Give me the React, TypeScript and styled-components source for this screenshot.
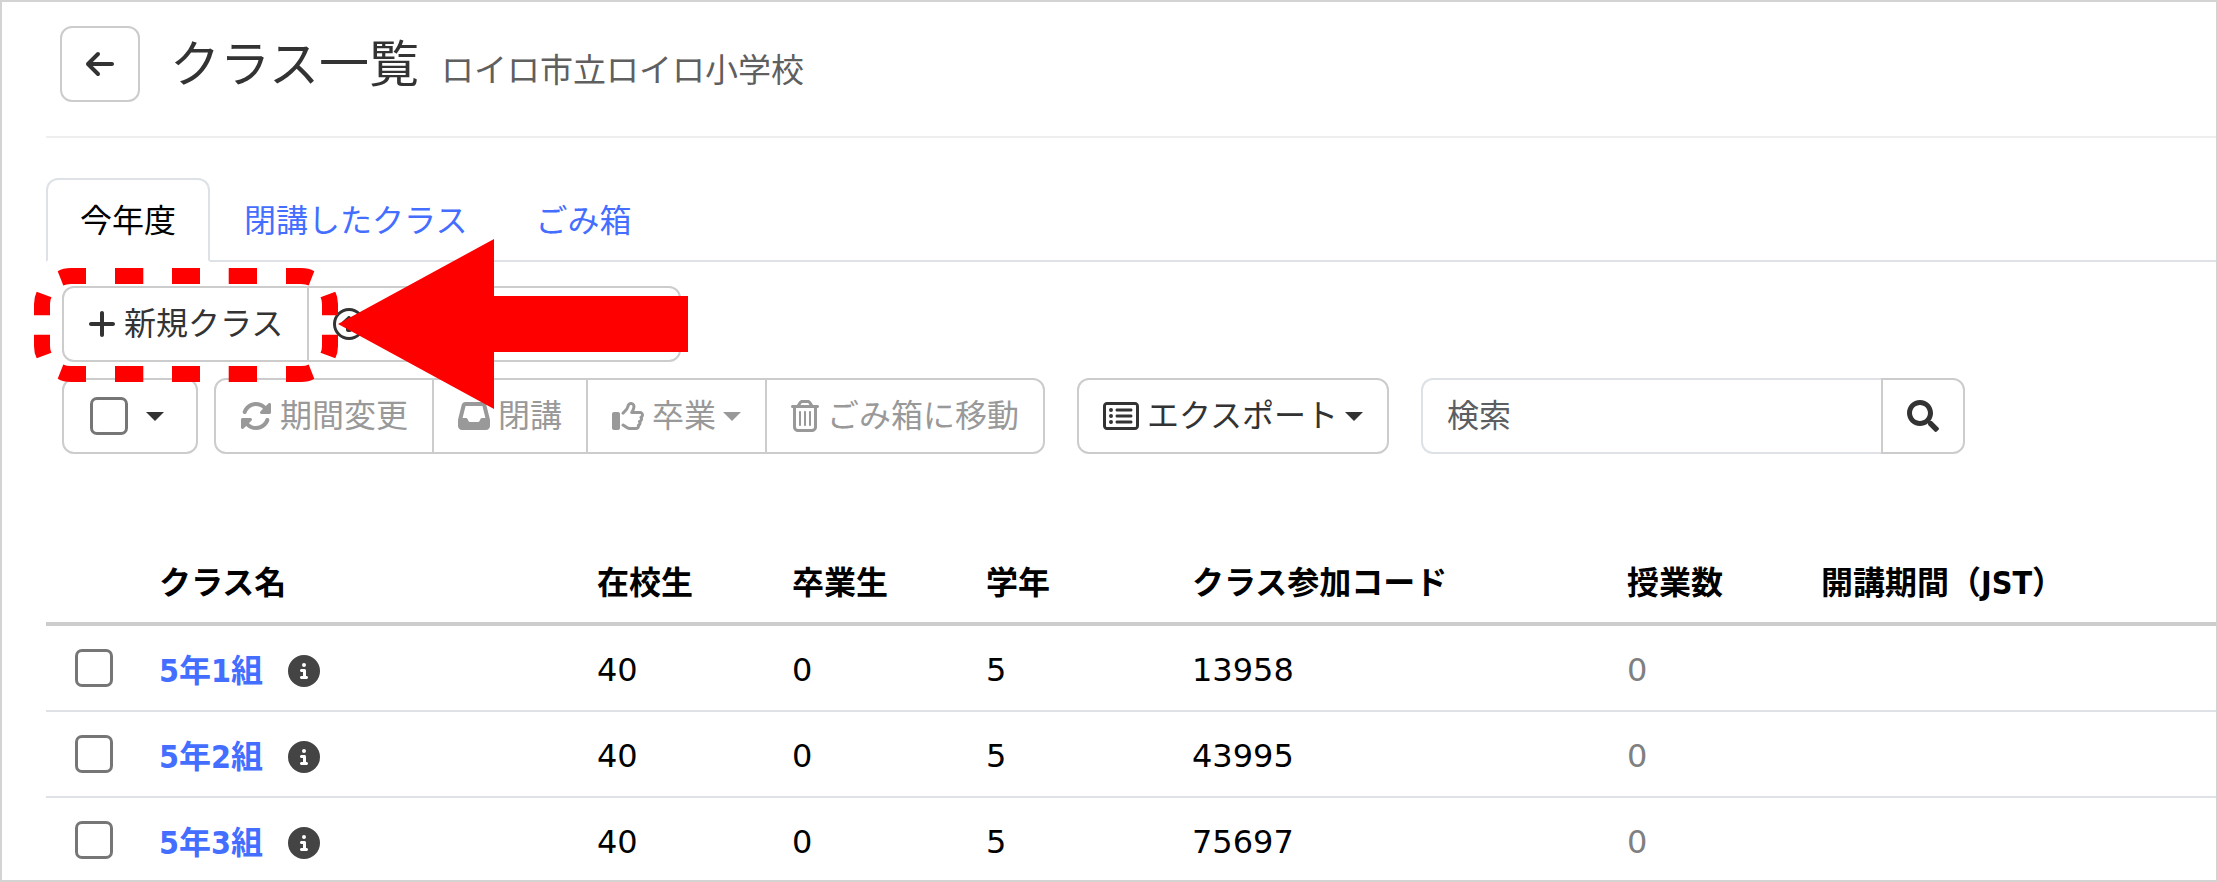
import React from "react";
import styled, { createGlobalStyle, css } from "styled-components";
import { FaSearch } from "react-icons/fa";
import {
  FaArrowLeft,
  FaCircleInfo,
  FaInbox,
  FaPlus,
  FaRegCircleUp,
  FaRegRectangleList,
  FaRegThumbsUp,
  FaRegTrashCan,
  FaRotate,
} from "react-icons/fa6";

const GlobalStyle = createGlobalStyle`
  *, *::before, *::after { box-sizing: border-box; }
  body {
    margin: 0;
    background: #fff;
    color: #000;
    font-family: "DejaVu Sans", "Noto Sans CJK JP", sans-serif;
    font-size: 32px;
    line-height: 48px;
  }
  button, input { font: inherit; }
  svg { flex: none; }
`;

const Frame = styled.div`
  position: relative;
  height: 100vh;
  padding-left: 44px;
  border: 2px solid #d3d3d3;
  overflow: auto;
  scrollbar-width: none;
`;

const PageHeader = styled.header`
  display: flex;
  align-items: center;
  gap: 30px;
  padding: 24px 14px 34px;
  border-bottom: 2px solid #eee;
`;

const buttonBox = css`
  display: inline-flex;
  align-items: center;
  justify-content: center;
  height: 76px;
  padding: 0 24px;
  border: 2px solid #ccc;
  background: #fff;
  color: #333;
  white-space: nowrap;
  cursor: pointer;
`;

const narrowIcon = css`
  width: 28px;
  height: 32px;
`;

const BackIcon = styled(FaArrowLeft)`
  ${narrowIcon}
`;

const PlusIcon = styled(FaPlus)`
  ${narrowIcon}
`;

const TrashIcon = styled(FaRegTrashCan)`
  ${narrowIcon}
`;

const ListIcon = styled(FaRegRectangleList)`
  width: 36px;
  height: 32px;
`;

const BackButton = styled.button`
  ${buttonBox}
  border-radius: 12px;
`;

const Heading = styled.div`
  display: flex;
  align-items: baseline;
  gap: 22px;
  padding-top: 2px;
`;

const Title = styled.h1`
  margin: 0;
  color: #333;
  font-size: 50px;
  font-weight: 400;
  line-height: 60px;
`;

const School = styled.span`
  color: #5f5f5f;
  font-size: 33px;
`;

const Tabs = styled.nav`
  display: flex;
  margin-top: 40px;
  border-bottom: 2px solid #dee2e6;
`;

const Tab = styled.a<{ $active?: boolean }>`
  height: 84px;
  margin-bottom: -2px;
  padding: 17px 32px 15px;
  border: 2px solid transparent;
  border-radius: 12px 12px 0 0;
  color: #446eff;
  text-decoration: none;
  ${(p) =>
    p.$active &&
    css`
      border-color: #dee2e6 #dee2e6 #fff;
      background: #fff;
      color: #000;
    `}
`;

const Actions = styled.div`
  display: flex;
  flex-direction: column;
  gap: 16px;
  padding: 24px 16px 0;
`;

const Toolbar = styled.div`
  display: flex;
  flex-wrap: wrap;
  gap: 16px 32px;
`;

const SelectionTools = styled.div`
  display: flex;
  gap: 16px;
`;

const Group = styled.div`
  display: flex;
`;

const Button = styled.button<{ $wide?: boolean }>`
  ${buttonBox}
  gap: 8px;
  justify-content: flex-start;
  ${(p) => p.$wide && "width: 374px;"}

  & + & { margin-left: -2px; }
  &:first-child { border-radius: 12px 0 0 12px; }
  &:last-child { border-radius: 0 12px 12px 0; }
  &:only-child { border-radius: 12px; }
  &:disabled { color: #999; cursor: default; }
`;

const Caret = styled.span`
  border: 9px solid transparent;
  border-top-color: currentColor;
  border-bottom: 0;
`;

const MenuLabel = styled.span`
  display: inline-flex;
  align-items: center;
  gap: 7px;
`;

const Checkbox = styled.input`
  display: block;
  appearance: none;
  width: 38px;
  height: 38px;
  margin: 0;
  border: 3px solid #767676;
  border-radius: 7px;
  background: #fff;
  &:checked { background: #446eff; }
`;

const SelectAll = styled.div`
  display: flex;
  align-items: center;
  gap: 18px;
  height: 76px;
  padding: 0 32px 0 26px;
  border: 2px solid #ccc;
  border-radius: 12px;
`;

const CaretButton = styled.button`
  display: flex;
  padding: 0;
  border: 0;
  background: none;
  color: #333;
`;

const Search = styled.form`
  display: flex;
  width: 544px;
`;

const SearchInput = styled.input`
  flex: 1;
  min-width: 0;
  height: 76px;
  padding: 0 24px;
  border: 2px solid #dee2e6;
  border-right: 0;
  border-radius: 12px 0 0 12px;
  color: #333;
  &::placeholder { color: #5c5f62; opacity: 1; }
`;

const SearchButton = styled.button`
  ${buttonBox}
  border-radius: 0 12px 12px 0;
`;

const Table = styled.table`
  width: 100%;
  margin-top: 88px;
  border-collapse: separate;
  border-spacing: 0;
  table-layout: fixed;
`;

const Col = styled.col<{ $width?: number }>`
  width: ${(p) => (p.$width ? `${p.$width}px` : "auto")};
`;

const HeadCell = styled.th`
  height: 84px;
  padding: 2px 16px 0;
  border-bottom: 4px solid #ccc;
  font-family: "DejaVu Sans Condensed", "DejaVu Sans", "Noto Sans CJK JP", sans-serif;
  font-weight: 700;
  text-align: left;
  white-space: nowrap;
`;

const Cell = styled.td<{ $muted?: boolean }>`
  height: 86px;
  padding: 4px 16px 0;
  border-bottom: 2px solid #dee2e6;
  color: ${(p) => (p.$muted ? "#808080" : "#000")};
  white-space: nowrap;
`;

const CheckCell = styled(Cell)`
  padding: 0 0 0 29px;
`;

const NameBox = styled.div`
  display: flex;
  align-items: center;
  gap: 25px;
  padding-top: 2px;
`;

const ClassLink = styled.a`
  color: #446eff;
  font-family: "DejaVu Sans Condensed", "DejaVu Sans", "Noto Sans CJK JP", sans-serif;
  font-weight: 700;
  text-decoration: none;
`;

const InfoButton = styled.button`
  display: flex;
  padding: 0;
  border: 0;
  background: none;
  color: #444;
`;

const Callout = styled.svg`
  position: absolute;
  top: 0;
  left: 0;
  width: 700px;
  height: 420px;
  pointer-events: none;
`;

const columnWidths = [97, 438, 195, 194, 206, 435, 194, undefined];

const headings = ["クラス名", "在校生", "卒業生", "学年", "クラス参加コード", "授業数", "開講期間（JST）"];

const classes = [
  { name: "5年1組", enrolled: 40, graduated: 0, grade: 5, code: "13958", lessons: 0 },
  { name: "5年2組", enrolled: 40, graduated: 0, grade: 5, code: "43995", lessons: 0 },
  { name: "5年3組", enrolled: 40, graduated: 0, grade: 5, code: "75697", lessons: 0 },
];

// Mirrored about the centre of the dashed outline to make its four corners.
const corners = [
  undefined,
  "translate(372 0) scale(-1 1)",
  "translate(0 650) scale(1 -1)",
  "translate(372 650) scale(-1 -1)",
];

function NewClassCallout() {
  return (
    <Callout viewBox="2 2 700 420" fill="#f00" aria-hidden="true">
      {corners.map((transform, i) => (
        <g key={i} transform={transform}>
          <path d="M57.7 271.3Q63 268 71 268H86V284H71Q66 284 63.3 285.5Z" />
          <path d="M36.7 291.7Q34 297 34 304V315.3H50V304Q50 300 51.5 297.3Z" />
          <path d="M115 268H143.3V284H115Z" />
        </g>
      ))}
      <path d="M172 268H200V284H172ZM172 366H200V382H172Z" />
      <path d="M338 324L494 239V296H688V352H494V409Z" />
    </Callout>
  );
}

export default function App() {
  return (
    <>
      <GlobalStyle />
      <Frame>
        <PageHeader>
          <BackButton type="button" aria-label="戻る">
            <BackIcon />
          </BackButton>
          <Heading>
            <Title>クラス一覧</Title>
            <School>ロイロ市立ロイロ小学校</School>
          </Heading>
        </PageHeader>

        <Tabs>
          <Tab href="#current" $active aria-current="page">今年度</Tab>
          <Tab href="#closed">閉講したクラス</Tab>
          <Tab href="#trash">ごみ箱</Tab>
        </Tabs>

        <Actions>
          <Group>
            <Button type="button">
              <PlusIcon />
              新規クラス
            </Button>
            <Button type="button" $wide aria-label="アップロード">
              <FaRegCircleUp />
            </Button>
          </Group>

          <Toolbar>
            <SelectionTools>
              <SelectAll>
                <Checkbox type="checkbox" aria-label="すべて選択" />
                <CaretButton type="button" aria-label="選択メニュー">
                  <Caret />
                </CaretButton>
              </SelectAll>
              <Group>
                <Button type="button" disabled>
                  <FaRotate />
                  期間変更
                </Button>
                <Button type="button" disabled>
                  <FaInbox />
                  閉講
                </Button>
                <Button type="button" disabled>
                  <FaRegThumbsUp />
                  <MenuLabel>
                    卒業
                    <Caret />
                  </MenuLabel>
                </Button>
                <Button type="button" disabled>
                  <TrashIcon />
                  ごみ箱に移動
                </Button>
              </Group>
            </SelectionTools>
            <Group>
              <Button type="button">
                <ListIcon />
                <MenuLabel>
                  エクスポート
                  <Caret />
                </MenuLabel>
              </Button>
            </Group>
            <Search role="search">
              <SearchInput type="text" placeholder="検索" aria-label="検索" />
              <SearchButton type="button" aria-label="検索する">
                <FaSearch />
              </SearchButton>
            </Search>
          </Toolbar>
        </Actions>

        <Table>
          <colgroup>
            {columnWidths.map((width, i) => (
              <Col key={i} $width={width} />
            ))}
          </colgroup>
          <thead>
            <tr>
              <HeadCell as="td" />
              {headings.map((heading) => (
                <HeadCell key={heading} scope="col">{heading}</HeadCell>
              ))}
            </tr>
          </thead>
          <tbody>
            {classes.map((c) => (
              <tr key={c.code}>
                <CheckCell>
                  <Checkbox type="checkbox" aria-label={`${c.name}を選択`} />
                </CheckCell>
                <Cell>
                  <NameBox>
                    <ClassLink href={`#${c.code}`}>{c.name}</ClassLink>
                    <InfoButton type="button" aria-label={`${c.name}の情報`}>
                      <FaCircleInfo />
                    </InfoButton>
                  </NameBox>
                </Cell>
                <Cell>{c.enrolled}</Cell>
                <Cell>{c.graduated}</Cell>
                <Cell>{c.grade}</Cell>
                <Cell>{c.code}</Cell>
                <Cell $muted>{c.lessons}</Cell>
                <Cell />
              </tr>
            ))}
          </tbody>
        </Table>

        <NewClassCallout />
      </Frame>
    </>
  );
}
